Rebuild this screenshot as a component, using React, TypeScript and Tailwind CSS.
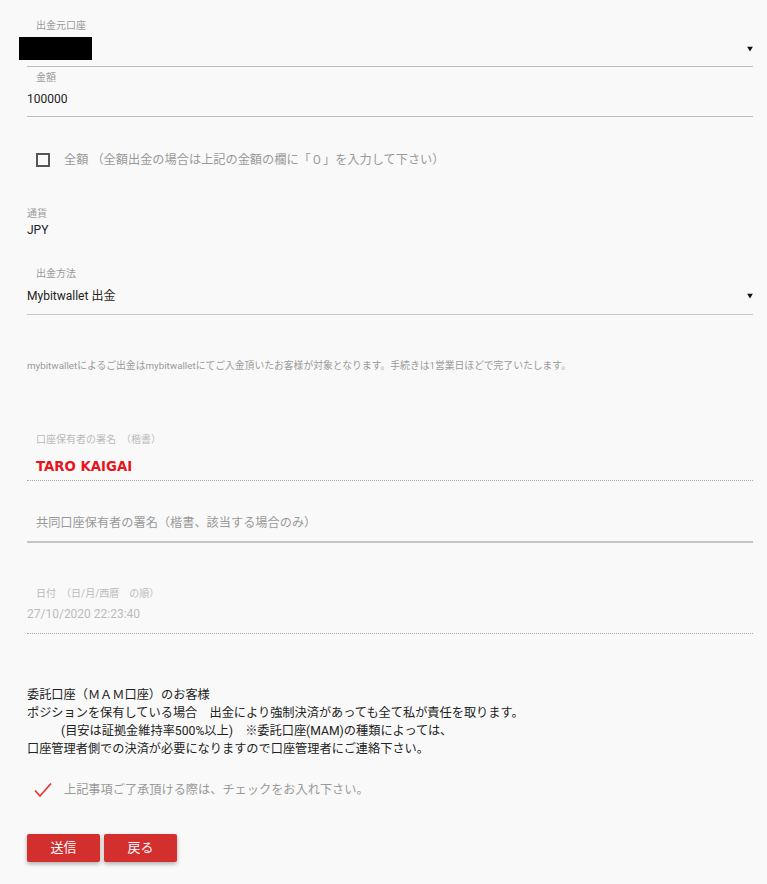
const font = { fontFamily: '"Roboto", "Noto Sans CJK JP", sans-serif' };

function Arrow() {
  return (
    <svg className="absolute right-0 top-1/2 -translate-y-1/2" width="6" height="5" viewBox="0 0 6 5">
      <path d="M0 0 H6 L3 5 Z" fill="#111" />
    </svg>
  );
}

export default function App() {
  return (
    <div
      className="min-h-[884px] bg-[#f9f9f9] pl-[27px] pr-[14px] pt-[18px] text-[12px] text-[#222]"
      style={font}
    >
      {/* 出金元口座 */}
      <div>
        <div className="flex h-[14px] items-center pl-[9px] text-[10px] text-[#999]">出金元口座</div>
        <div className="relative mt-[5px] flex h-[23px] items-center">
          <div className="-ml-[8px] h-[23px] w-[73px] bg-black" />
          <Arrow />
        </div>
        <div className="mt-[6px] h-[1px] bg-[#bdbdbd]" />
      </div>

      {/* 金額 */}
      <div className="pt-[3px]">
        <div className="flex h-[14px] items-center pl-[9px] text-[10px] text-[#999]">金額</div>
        <div className="mt-[7px] flex h-[16px] items-center">100000</div>
        <div className="mt-[9px] h-[1px] bg-[#bdbdbd]" />
      </div>

      {/* 全額 */}
      <label className="mt-[35px] flex h-[16px] items-center pl-[9px]">
        <span className="h-[14px] w-[14px] border-2 border-[#555]" />
        <span className="ml-[14px] text-[12.2px] text-[#999]">
          全額 （全額出金の場合は上記の金額の欄に「０」を入力して下さい）
        </span>
      </label>

      {/* 通貨 */}
      <div className="mt-[38px]">
        <div className="flex h-[14px] items-center text-[10px] text-[#999]">通貨</div>
        <div className="mt-[2px] flex h-[16px] items-center">JPY</div>
      </div>

      {/* 出金方法 */}
      <div className="mt-[28px]">
        <div className="flex h-[14px] items-center pl-[9px] text-[10px] text-[#999]">出金方法</div>
        <div className="relative mt-[8px] flex h-[16px] items-center">
          <span>Mybitwallet 出金</span>
          <Arrow />
        </div>
        <div className="mt-[10px] h-[1px] bg-[#c8c8c8]" />
      </div>

      <p className="mt-[45px] flex h-[12px] items-center text-[9.8px] text-[#999]">
        mybitwalletによるご出金はmybitwalletにてご入金頂いたお客様が対象となります。手続きは1営業日ほどで完了いたします。
      </p>

      {/* 口座保有者の署名 */}
      <div className="mt-[60px]">
        <div className="flex h-[14px] items-center pl-[9px] text-[10px] text-[#bbb]">口座保有者の署名　（楷書）</div>
        <div
          className="mt-[13px] flex h-[16px] items-center pl-[9px] text-[13.3px] font-bold text-[#e8141c]"
          style={{ fontFamily: '"DejaVu Sans", sans-serif' }}
        >
          TARO KAIGAI
        </div>
        <div className="mt-[5px] border-t border-dotted border-[#aaa]" />
      </div>

      {/* 共同口座保有者の署名 */}
      <div className="mt-[34px]">
        <div className="flex h-[16px] items-center pl-[9px] text-[12.2px] text-[#999]">
          共同口座保有者の署名（楷書、該当する場合のみ）
        </div>
        <div className="mt-[10px] h-[2px] bg-[#c4c4c4]" />
      </div>

      {/* 日付 */}
      <div className="mt-[43px]">
        <div className="flex h-[14px] items-center pl-[9px] text-[10px] text-[#bbb]">日付　（日/月/西暦　の順）</div>
        <div className="mt-[6px] flex h-[16px] items-center text-[#bbb]">27/10/2020 22:23:40</div>
        <div className="mt-[11px] border-t border-dotted border-[#aaa]" />
      </div>

      {/* 注意書き */}
      <div className="mt-[52px] text-[12.2px] text-[#222]">
        <div className="flex h-[18px] items-center">委託口座（ＭＡＭ口座）のお客様</div>
        <div className="flex h-[18px] items-center">ポジションを保有している場合　出金により強制決済があっても全て私が責任を取ります。</div>
        <div className="flex h-[18px] items-center pl-[34px]">(目安は証拠金維持率500%以上)　※委託口座(MAM)の種類によっては、</div>
        <div className="flex h-[18px] items-center">口座管理者側での決済が必要になりますので口座管理者にご連絡下さい。</div>
      </div>

      <label className="mt-[24px] flex h-[16px] items-center pl-[7px]">
        <svg width="18" height="16" viewBox="0 0 18 16" fill="none">
          <path d="M1 8.5 L6 14 L17 1.5" stroke="#e53935" strokeWidth="1.8" />
        </svg>
        <span className="ml-[12px] text-[12.2px] text-[#999]">
          上記事項ご了承頂ける際は、チェックをお入れ下さい。
        </span>
      </label>

      <div className="mt-[36px] flex gap-[4px] pb-[23px]">
        <button className="h-[28px] w-[73px] rounded-[2px] bg-[#d32f2f] text-[13px] text-white shadow-[0_2px_4px_rgba(0,0,0,0.3)]">
          送信
        </button>
        <button className="h-[28px] w-[73px] rounded-[2px] bg-[#d32f2f] text-[13px] text-white shadow-[0_2px_4px_rgba(0,0,0,0.3)]">
          戻る
        </button>
      </div>
    </div>
  );
}
